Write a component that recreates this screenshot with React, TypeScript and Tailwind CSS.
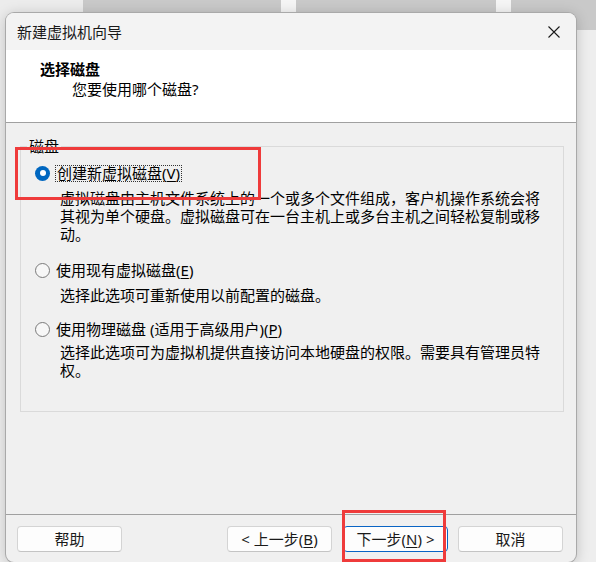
import React from "react";

const FONT = "font-['Noto_Sans','Noto_Sans_CJK_SC',sans-serif]";

function Acc({ k }: { k: string }) {
  return (
    <>
      (<span className="underline underline-offset-[2px] decoration-1">{k}</span>)
    </>
  );
}

function Radio({ checked }: { checked?: boolean }) {
  if (checked) {
    return (
      <span className="flex h-[15px] w-[15px] shrink-0 items-center justify-center rounded-full bg-[#0067c0]">
        <span className="h-[6px] w-[6px] rounded-full bg-white" />
      </span>
    );
  }
  return (
    <span className="h-[15px] w-[15px] shrink-0 rounded-full border border-[#7a7a7a] bg-[#f7f7f7]" />
  );
}

function Btn({
  children,
  primary,
}: {
  children: React.ReactNode;
  primary?: boolean;
}) {
  return (
    <div
      className={
        primary
          ? "flex h-[26px] w-[105px] items-center justify-center rounded-[4px] border border-[#0a64c4] bg-[#fdfdfd] text-[15px] leading-[18px] text-[#1a1a1a]"
          : "flex h-[26px] w-[105px] items-center justify-center rounded-[4px] border border-[#d4d4d4] border-b-[#c4c4c4] bg-[#fdfdfd] text-[15px] leading-[18px] text-[#1a1a1a]"
      }
    >
      {children}
    </div>
  );
}

export default function App() {
  return (
    <div className={`relative h-[562px] w-[596px] overflow-hidden bg-[#eeeeee] ${FONT}`}>
      {/* desktop backdrop (windows behind the dialog) */}
      <div className="absolute inset-0 flex flex-col">
        <div className="flex h-[30px]">
          <div className="w-[83px] bg-[#ececec]" />
          <div className="w-[198px] bg-[#c9c9c9]" />
          <div className="w-[15px] bg-[#f5f5f5]" />
          <div className="w-[200px] bg-[#c9c9c9]" />
          <div className="w-[15px] bg-[#f5f5f5]" />
          <div className="flex-1 bg-[#c9c9c9]" />
        </div>
        <div className="flex-1 bg-[#eeeeee]" />
      </div>

      {/* dialog */}
      <div className="relative z-10 pl-[6px] pt-[13px]">
        <div className="flex h-[549px] w-[570px] flex-col overflow-hidden rounded-[8px] bg-[#f0f0f0] text-black shadow-[0_0_0_1px_#a9a9a9,0_2px_14px_rgba(0,0,0,0.22)]">
          {/* title bar */}
          <div className="flex h-[37px] shrink-0 items-center justify-between bg-[#f3f3f3] pl-[11px] pr-[16px]">
            <span className="text-[15px] leading-[18px] text-[#1a1a1a]">新建虚拟机向导</span>
            <svg width="12" height="12" viewBox="0 0 12 12" className="mt-[1px]">
              <path d="M0.5 0.5 L11.5 11.5 M11.5 0.5 L0.5 11.5" stroke="#1a1a1a" strokeWidth="1.1" fill="none" />
            </svg>
          </div>

          {/* header */}
          <div className="h-[73px] shrink-0 border-b border-[#a0a0a0] bg-white pl-[34px] pt-[10px]">
            <div className="text-[15px] font-bold leading-[18px]">选择磁盘</div>
            <div className="ml-[32px] mt-[2px] text-[15px] leading-[18px]">您要使用哪个磁盘?</div>
          </div>

          {/* content */}
          <div className="flex-1 pl-[14px] pt-[14px]">
            <fieldset className="h-[275px] w-[544px] border border-[#dadada] pl-[14px]">
              <legend className="-ml-[8px] px-[2px] text-[15px] leading-[18px]">磁盘</legend>

              <div className="mt-[9px] flex h-[18px] items-center gap-[5px]">
                <Radio checked />
                <span className="border border-dotted border-[#333] pl-[1px] pr-[1px] text-[15px] leading-[15px]">
                  创建新虚拟磁盘<Acc k="V" />
                </span>
              </div>
              <div className="ml-[25px] mt-[7px] text-[15px] leading-[18px] whitespace-nowrap">
                <div>虚拟磁盘由主机文件系统上的一个或多个文件组成，客户机操作系统会将</div>
                <div>其视为单个硬盘。虚拟磁盘可在一台主机上或多台主机之间轻松复制或移</div>
                <div>动。</div>
              </div>

              <div className="mt-[18px] flex h-[18px] items-center gap-[6px]">
                <Radio />
                <span className="text-[15px] leading-[18px]">
                  使用现有虚拟磁盘<Acc k="E" />
                </span>
              </div>
              <div className="ml-[25px] mt-[7px] text-[15px] leading-[18px] whitespace-nowrap">
                选择此选项可重新使用以前配置的磁盘。
              </div>

              <div className="mt-[16px] flex h-[18px] items-center gap-[6px]">
                <Radio />
                <span className="text-[15px] leading-[18px]">
                  使用物理磁盘 (适用于高级用户)<Acc k="P" />
                </span>
              </div>
              <div className="ml-[25px] mt-[5px] text-[15px] leading-[18px] whitespace-nowrap">
                <div>选择此选项可为虚拟机提供直接访问本地硬盘的权限。需要具有管理员特</div>
                <div>权。</div>
              </div>
            </fieldset>
          </div>

          {/* footer */}
          <div className="flex h-[48px] shrink-0 items-start border-t border-[#a0a0a0] pl-[11px] pr-[13px] pt-[11px]">
            <Btn>帮助</Btn>
            <div className="flex-1" />
            <Btn>
              &lt; 上一步<Acc k="B" />
            </Btn>
            <div className="w-[11px]" />
            <Btn primary>
              下一步<Acc k="N" /> &gt;
            </Btn>
            <div className="w-[10px]" />
            <Btn>取消</Btn>
          </div>
        </div>
      </div>

      {/* red annotation boxes */}
      <div className="absolute left-[15px] top-[147px] z-20 h-[53px] w-[246px] border-[3px] border-[#ef3b3b]" />
      <div className="absolute left-[342px] top-[510px] z-20 h-[52px] w-[104px] border-[3px] border-[#ef3b3b]" />
    </div>
  );
}
